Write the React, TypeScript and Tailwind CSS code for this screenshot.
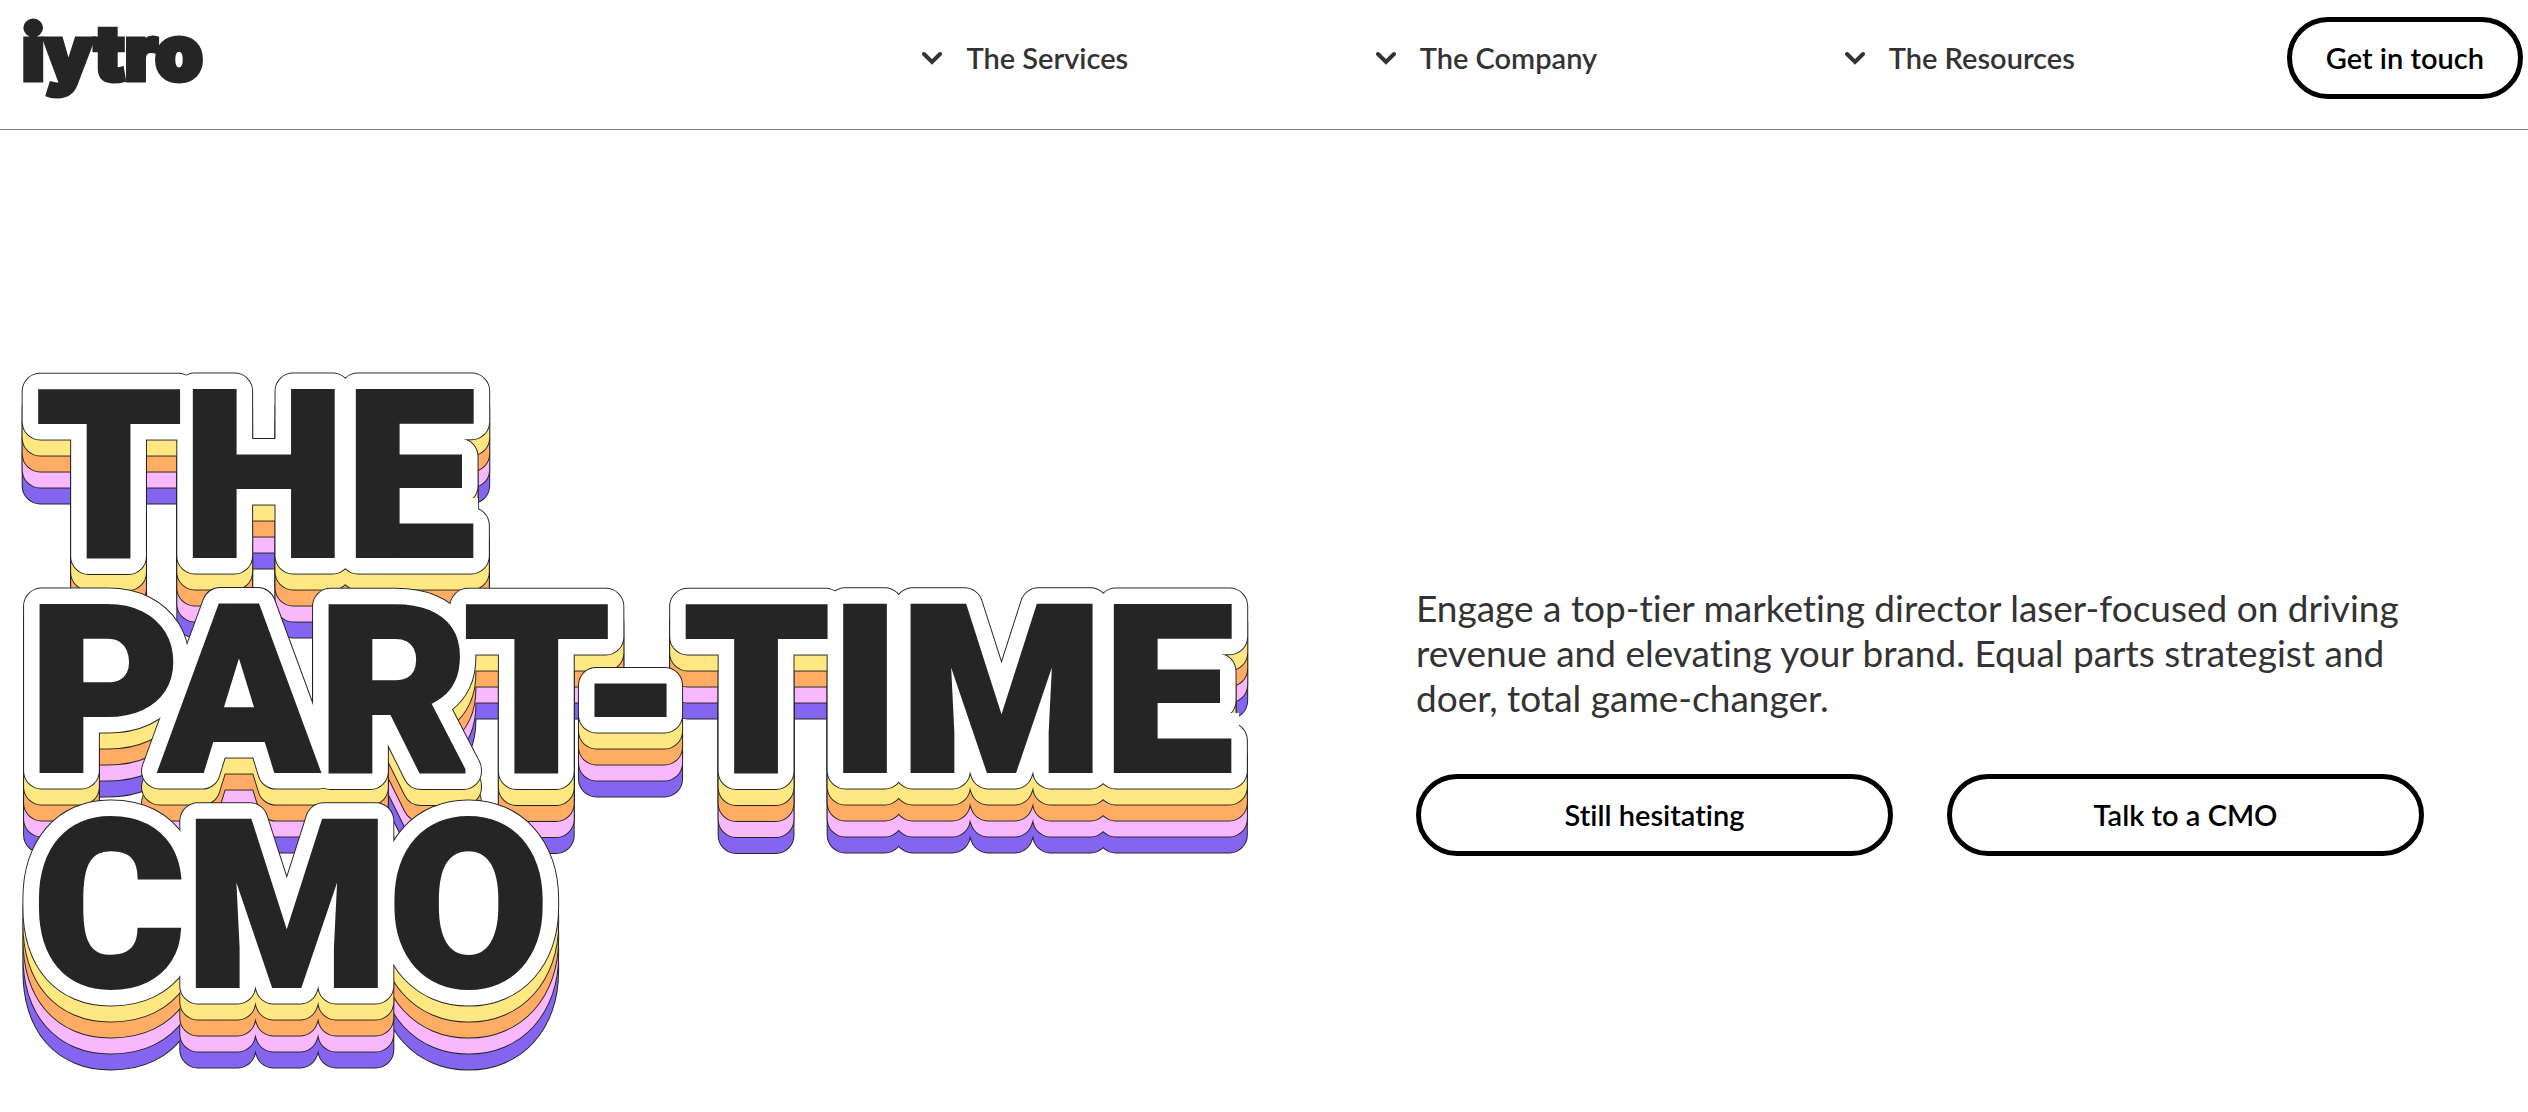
const navItems = ["The Services", "The Company", "The Resources"];

// "fill" closes the counters so the coloured layers stay behind the letters
const titleLines = [
  { text: "THE", x: 16, y: 186, fill: "M385 128h73v18h-73z" },
  {
    text: "PART-TIME",
    x: 9,
    y: 401,
    fill: "M60 265h60v55h-60z M345 265h50v55h-50z M1145 343h74v18h-74z",
  },
  {
    text: "CMO",
    x: 13,
    y: 616,
    fill: "M65 480h70v30h26v50h-26v40h-70z M415 470h66v135h-66z",
  },
];

// bottom layer first
const layers = [
  { color: "#8565ef", y: 64 },
  { color: "#f9b8fb", y: 48 },
  { color: "#ffad65", y: 32 },
  { color: "#ffe882", y: 16 },
  { color: "#ffffff", y: 0 },
];

const ChevronDown = () => (
  <svg width="20" height="14" viewBox="0 0 20 14" fill="none" aria-hidden="true">
    <path
      d="M2 3L10 11L18 3"
      stroke="#333333"
      strokeWidth="4"
      strokeLinecap="round"
    />
  </svg>
);

const Logo = () => (
  <a
    href="/"
    className="font-[Inter,sans-serif] text-[76px] leading-[70px] font-black text-[#252525] [-webkit-text-stroke:5px_#252525]"
  >
    iytro
  </a>
);

const Title = () => (
  <h1 className="shrink-0">
    <svg
      width="1248"
      height="700"
      className="block overflow-visible font-[Roboto,sans-serif] text-[232px] font-black"
    >
      {titleLines.map((line, i) => (
        <g key={line.text}>
          {layers.map((layer) => (
            <g key={layer.color} strokeLinejoin="round">
              <use href={`#title-${i}`} y={layer.y} fill="#252525" stroke="#252525" strokeWidth="37" />
              <use href={`#title-${i}`} y={layer.y} fill={layer.color} stroke={layer.color} strokeWidth="35" />
            </g>
          ))}
          <path d={line.fill} fill="#ffffff" />
          <g fill="#252525" stroke="#252525" strokeWidth="4">
            <text id={`title-${i}`} x={line.x} y={line.y}>
              {line.text}
            </text>
          </g>
        </g>
      ))}
    </svg>
  </h1>
);

const buttonClass =
  "flex h-[82px] cursor-pointer items-center justify-center rounded-full border-[5px] border-black bg-white text-[29px] font-semibold text-black";

const App = () => {
  return (
    <div className="min-h-screen bg-white font-[Lato,sans-serif] [font-variant-ligatures:none]">
      <header className="flex h-[130px] items-start justify-between border-b border-[#808080] pt-[17px] pr-[5px] pl-[22px]">
        <Logo />
        <div className="flex w-[64%] items-center justify-between">
          <nav className="flex w-[72%] items-center justify-between">
            {navItems.map((item) => (
              <button
                key={item}
                className="flex cursor-pointer items-center gap-6 text-[29px] font-semibold text-[#333333]"
              >
                <ChevronDown />
                {item}
              </button>
            ))}
          </nav>
          <button className={`${buttonClass} px-[34px]`}>Get in touch</button>
        </div>
      </header>

      <main className="flex items-center px-5 pt-60">
        <Title />
        <div className="mr-[84px] ml-[148px] flex-1">
          <p className="text-[37px] leading-[45px] text-[#333333]">
            Engage a top-tier marketing director laser-focused on driving
            revenue and elevating your brand. Equal parts strategist and doer,
            total game-changer.
          </p>
          <div className="mt-[54px] grid grid-cols-2 gap-[54px]">
            <button className={buttonClass}>Still hesitating</button>
            <button className={buttonClass}>Talk to a CMO</button>
          </div>
        </div>
      </main>
    </div>
  );
};

export default App;
